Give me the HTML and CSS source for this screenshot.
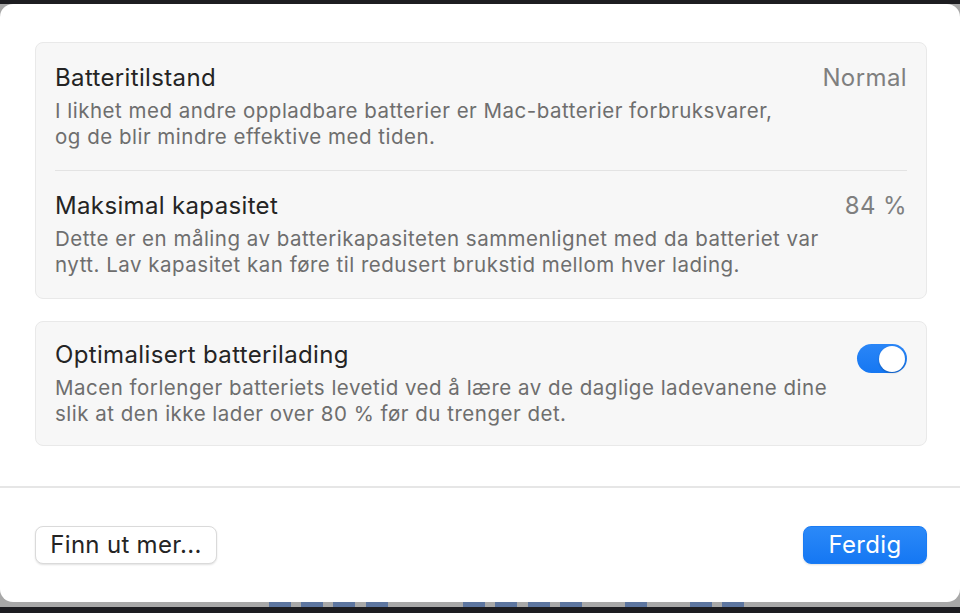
FILE: index.html
```html
<!DOCTYPE html>
<html lang="no">
<head>
<meta charset="utf-8">
<link rel="stylesheet" href="styles.css">
</head>
<body>
<div class="screen">
  <div class="topbar"></div>
  <div class="desk">
    <div class="window">
      <div class="content">
        <section class="card">
          <div class="row">
            <div class="text">
              <div class="title">Batteritilstand</div>
              <div class="desc">I likhet med andre oppladbare batterier er Mac-batterier forbruksvarer,<br>og de blir mindre effektive med tiden.</div>
            </div>
            <div class="value">Normal</div>
          </div>
          <div class="divider"></div>
          <div class="row">
            <div class="text">
              <div class="title">Maksimal kapasitet</div>
              <div class="desc">Dette er en måling av batterikapasiteten sammenlignet med da batteriet var<br>nytt. Lav kapasitet kan føre til redusert brukstid mellom hver lading.</div>
            </div>
            <div class="value">84 %</div>
          </div>
        </section>
        <section class="card">
          <div class="row compact">
            <div class="text">
              <div class="title">Optimalisert batterilading</div>
              <div class="desc">Macen forlenger batteriets levetid ved å lære av de daglige ladevanene dine<br>slik at den ikke lader over 80 % før du trenger det.</div>
            </div>
            <div class="toggle"><div class="knob"></div></div>
          </div>
        </section>
      </div>
      <div class="footer">
        <button class="btn">Finn ut mer...</button>
        <button class="btn primary">Ferdig</button>
      </div>
    </div>
    <div class="dock">
      <span class="gap" style="width:269px"></span><span class="seg"></span><span class="gap" style="width:10px"></span><span class="seg"></span><span class="gap" style="width:10px"></span><span class="seg"></span><span class="gap" style="width:11px"></span><span class="seg"></span><span class="gap" style="width:75px"></span><span class="seg"></span><span class="gap" style="width:10px"></span><span class="seg"></span><span class="gap" style="width:11px"></span><span class="seg"></span><span class="gap" style="width:10px"></span><span class="seg"></span><span class="gap" style="width:43px"></span><span class="seg"></span><span class="gap" style="width:43px"></span><span class="seg"></span><span class="gap" style="width:10px"></span><span class="seg"></span>
    </div>
  </div>
  <div class="bottombar"></div>
</div>
</body>
</html>
```

FILE: styles.css
```css
* { box-sizing: border-box; }
html, body { margin: 0; padding: 0; }
body {
  width: 960px;
  height: 613px;
  overflow: hidden;
  background: #1d1d21;
  font-family: Inter, "Noto Sans", "Liberation Sans", sans-serif;
}
.screen {
  width: 960px;
  height: 613px;
  display: flex;
  flex-direction: column;
}
.topbar { height: 4px; background: #1d1d21; flex: none; }
.desk {
  flex: none;
  height: 603px;
  background: #a8a8a8;
  display: flex;
  flex-direction: column;
}
.window {
  height: 598px;
  background: #ffffff;
  border-radius: 13px;
  display: flex;
  flex-direction: column;
  flex: none;
}
.content {
  padding: 38px 33px 40px 35px;
  display: flex;
  flex-direction: column;
  gap: 22px;
  border-bottom: 2px solid #e6e6e6;
}
.card {
  background: #f7f7f7;
  border: 1px solid #e9e9e9;
  border-radius: 8px;
  display: flex;
  flex-direction: column;
}
.row {
  display: flex;
  justify-content: space-between;
  align-items: flex-start;
  padding: 21px 19px 20px 19px;
}
.row.compact {
  padding: 19px 19px 18px 19px;
}
.title {
  font-size: 24px;
  line-height: 28px;
  letter-spacing: 0.35px;
  color: #242424;
  margin-bottom: 6px;
}
.desc {
  font-size: 20.5px;
  line-height: 26px;
  letter-spacing: 0.5px;
  color: #6e6e6e;
}
.value {
  font-size: 24px;
  line-height: 28px;
  letter-spacing: 0.4px;
  color: #7f7f7f;
}
.divider {
  height: 1px;
  background: #e3e3e3;
  margin: 0 19px;
}
.toggle {
  width: 50px;
  height: 29px;
  margin-top: 3px;
  border-radius: 15px;
  background: linear-gradient(#2a86f7, #1677f2);
  position: relative;
  flex: none;
}
.knob {
  position: absolute;
  right: 2px;
  top: 1.5px;
  width: 26px;
  height: 26px;
  border-radius: 50%;
  background: #fff;
  box-shadow: 0 1px 2px rgba(0,0,0,0.25);
}
.footer {
  flex: 1;
  display: flex;
  justify-content: space-between;
  align-items: flex-start;
  padding: 38px 33px 0 35px;
}
.btn {
  height: 38px;
  border-radius: 8px;
  font-family: inherit;
  font-size: 24px;
  line-height: 36px;
  letter-spacing: 0.3px;
  padding: 0;
  background: #ffffff;
  color: #242424;
  border: 1px solid #dadada;
  box-shadow: 0 1px 2px rgba(0,0,0,0.12);
  width: 182px;
}
.btn.primary {
  width: 124px;
  background: linear-gradient(#2b89f8, #1577f3);
  color: #ffffff;
  border-color: #1b7cf4;
}
.dock {
  flex: none;
  height: 5px;
  display: flex;
}
.dock .gap { display: block; height: 100%; }
.dock .seg { display: block; width: 22px; height: 100%; background: #5d76a0; }
.bottombar { flex: 1; background: #1d1d21; }
```
